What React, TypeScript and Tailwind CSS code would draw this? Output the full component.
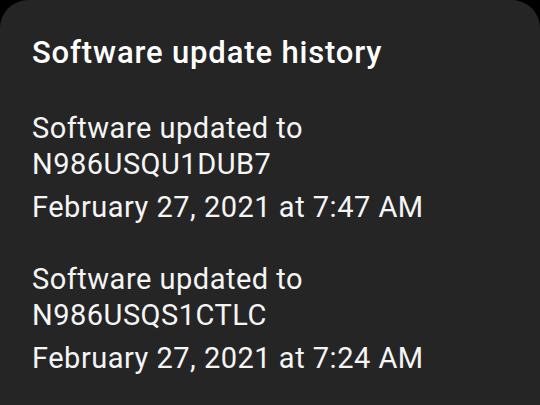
export default function App() {
  const updates = [
    { version: "N986USQU1DUB7", date: "February 27, 2021 at 7:47 AM" },
    { version: "N986USQS1CTLC", date: "February 27, 2021 at 7:24 AM" },
  ];

  return (
    <div className="h-screen w-full bg-black overflow-hidden" style={{ fontFamily: "Roboto, 'Noto Sans', sans-serif" }}>
      <div className="h-full w-full bg-[#252525] rounded-t-[28px] px-8 pt-[35px] text-[#f5f5f5]">
        <h1 className="text-[31px] leading-[36px] font-medium tracking-[0.85px] text-white">Software update history</h1>

        <div className="mt-[39px] flex flex-col gap-[36px]">
          {updates.map((u) => (
            <div key={u.version} className="flex flex-col text-[29px] leading-[36px] tracking-[0.5px]">
              <p>
                Software updated to
                <br />
                {u.version}
              </p>
              <p className="mt-[7px]">{u.date}</p>
            </div>
          ))}
        </div>
      </div>
    </div>
  );
}
